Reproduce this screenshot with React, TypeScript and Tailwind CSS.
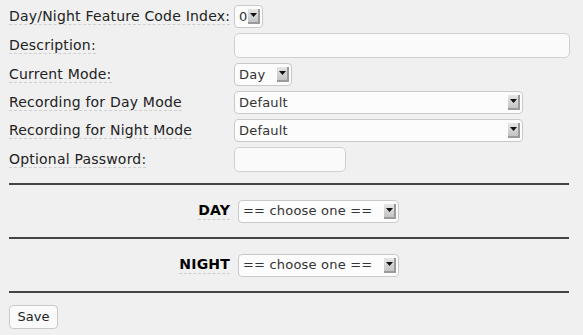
import React from 'react';

function Arrow() {
  return (
    <span className="absolute right-[2px] top-[3px] bottom-[3px] flex w-[12px] items-start justify-center border-r-2 border-b-2 border-r-[#9a9a9a] border-b-[#9a9a9a] bg-[linear-gradient(#e6e6e6,#c4c4c4)] pt-[4px]">
      <svg width="7" height="4" viewBox="0 0 7 4">
        <path d="M0 0h7L3.5 4z" fill="#111" />
      </svg>
    </span>
  );
}

function FakeSelect({ value, className }: { value: string; className: string }) {
  return (
    <div className={`relative flex h-[23px] items-center rounded-[4px] border border-[#c9c9c9] bg-[#fcfcfc] pl-[4px] text-[13px] tracking-[0.2px] text-[#333] ${className}`}>
      <span className="whitespace-pre">{value}</span>
      <Arrow />
    </div>
  );
}

function Label({ children, bold }: { children: React.ReactNode; bold?: boolean }) {
  return (
    <span className={`border-b border-dashed border-[#cfcfcf] text-[14px] leading-[17px] tracking-[0.2px] ${bold ? 'font-bold text-black' : 'text-[#222]'}`}>
      {children}
    </span>
  );
}

export default function App() {
  return (
    <div className="h-[335px] w-[583px] bg-[#f0f0f0] px-[9px] pt-[5px] font-['DejaVu_Sans',Verdana,sans-serif] text-[13px]">
      <div className="flex flex-col gap-[5px]">
        <div className="flex items-center">
          <div className="w-[225px]"><Label>Day/Night Feature Code Index:</Label></div>
          <FakeSelect value="0" className="w-[29px] h-[22px]" />
        </div>
        <div className="flex items-center">
          <div className="w-[225px]"><Label>Description:</Label></div>
          <div className="h-[25px] w-[336px] rounded-[5px] border border-[#d0d0d0] bg-[#fafafa]" />
        </div>
        <div className="flex items-center">
          <div className="w-[225px]"><Label>Current Mode:</Label></div>
          <FakeSelect value="Day" className="w-[58px]" />
        </div>
        <div className="flex items-center">
          <div className="w-[225px]"><Label>Recording for Day Mode</Label></div>
          <FakeSelect value="Default" className="w-[289px]" />
        </div>
        <div className="flex items-center">
          <div className="w-[225px]"><Label>Recording for Night Mode</Label></div>
          <FakeSelect value="Default" className="w-[289px]" />
        </div>
        <div className="flex items-center">
          <div className="w-[225px]"><Label>Optional Password:</Label></div>
          <div className="h-[25px] w-[112px] rounded-[5px] border border-[#d0d0d0] bg-[#fafafa]" />
        </div>
      </div>

      <div className="mt-[11px] w-[560px] border-t-2 border-[#444]" />

      <div className="flex h-[52px] items-center">
        <div className="flex w-[221px] justify-end"><Label bold>DAY</Label></div>
        <FakeSelect value="== choose one ==" className="ml-[8px] w-[161px]" />
      </div>

      <div className="w-[560px] border-t-2 border-[#444]" />

      <div className="flex h-[52px] items-center">
        <div className="flex w-[221px] justify-end"><Label bold>NIGHT</Label></div>
        <FakeSelect value="== choose one ==" className="ml-[8px] w-[161px]" />
      </div>

      <div className="w-[560px] border-t-2 border-[#444]" />

      <button className="mt-[12px] flex h-[24px] w-[49px] items-center justify-center rounded-[4px] border border-[#c9c9c9] bg-[#fafafa] text-[13px] text-[#222]">
        Save
      </button>
    </div>
  );
}
